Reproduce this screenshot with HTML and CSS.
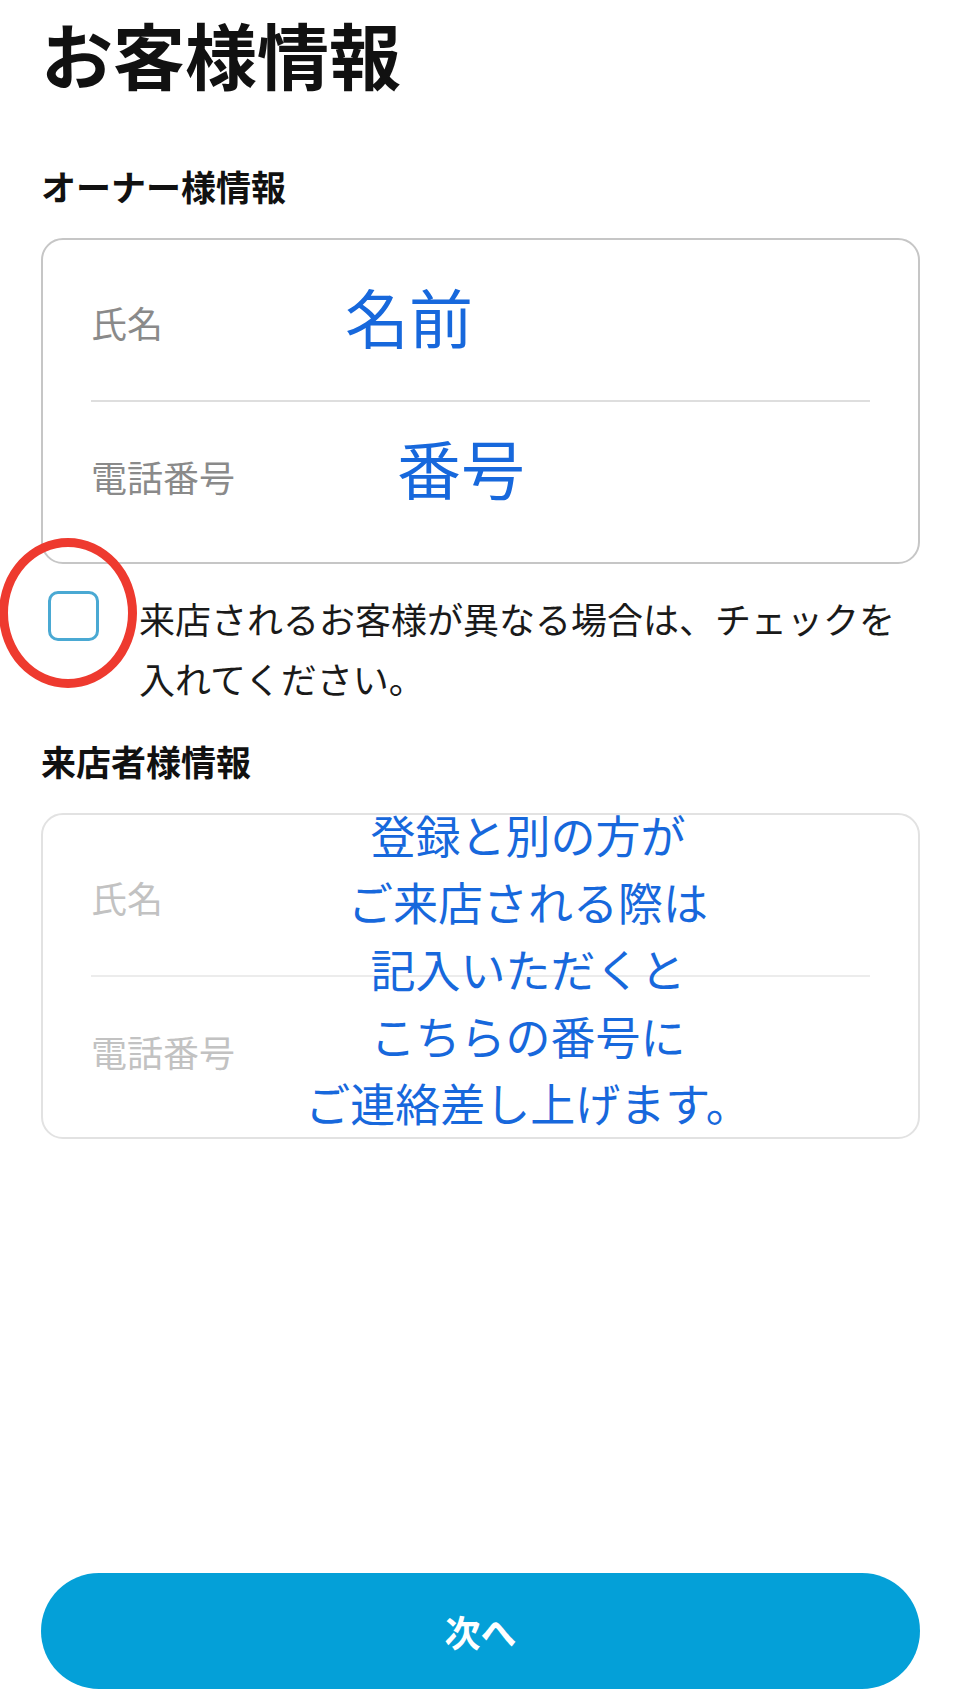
FILE: index.html
```html
<!DOCTYPE html>
<html lang="ja">
<head>
    <meta charset="UTF-8">
    <meta name="viewport" content="width=device-width, initial-scale=1.0">
    <title>お客様情報</title>
    <link rel="stylesheet" href="styles.css">
</head>
<body>

<div class="page">
    <h1 class="pageTitle">お客様情報</h1>

    <h2 class="sectionTitle">オーナー様情報</h2>
    <div class="formCard">
        <div class="formRow">
            <span class="rowLabel">氏名</span>
            <span class="note noteName">名前</span>
        </div>
        <div class="formRow">
            <span class="rowLabel">電話番号</span>
            <span class="note notePhone">番号</span>
        </div>
    </div>

    <label class="checkRow">
        <span class="checkBox">
            <span class="markCircle"></span>
        </span>
        <span class="checkText">来店されるお客様が異なる場合は、チェックを入れてください。</span>
    </label>

    <h2 class="sectionTitle">来店者様情報</h2>
    <div class="formCard formCard--disabled">
        <div class="formRow">
            <span class="rowLabel">氏名</span>
        </div>
        <div class="formRow">
            <span class="rowLabel">電話番号</span>
        </div>
        <!-- annotation over the second card -->
        <div class="noteBlock">
            登録と別の方が<br>
            ご来店される際は<br>
            記入いただくと<br>
            こちらの番号に<br>
            ご連絡差し上げます。
        </div>
    </div>

    <button class="nextBtn" id="nextBtn">次へ</button>
</div>

</body>
</html>
```

FILE: styles.css
```css
body {
    font-family: "Noto Sans CJK JP", "Noto Sans", sans-serif;
    margin: 0;
    padding: 0;
    background-color: #fff;
    color: #1a1a1a;
}
.page {
    display: flex;
    flex-direction: column;
    min-height: 1706px;
    box-sizing: border-box;
    padding: 8px 40px 17px 41px;
}
.pageTitle {
    margin: 0;
    font-size: 72px;
    line-height: 90px;
    font-weight: 700;
    color: #111;
}
.sectionTitle {
    margin: 63px 0 27px;
    font-size: 35px;
    line-height: 50px;
    font-weight: 700;
    color: #111;
}
.checkRow + .sectionTitle {
    margin-top: 28px;
}
.formCard {
    position: relative;
    border: 2px solid #c6c6c6;
    border-radius: 22px;
    padding: 8px 48px;
}
.formCard--disabled {
    border-color: #e2e2e2;
}
.formRow {
    position: relative;
    display: flex;
    align-items: center;
    height: 152px;
}
.formRow + .formRow {
    border-top: 2px solid #dedede;
}
.formCard--disabled .formRow + .formRow {
    border-top-color: #ececec;
}
.rowLabel {
    font-size: 36px;
    line-height: 50px;
    color: #8a8a8a;
    margin-top: -4px;
}
.formCard--disabled .rowLabel {
    color: #c2c2c2;
}
.note {
    position: absolute;
    font-size: 64px;
    line-height: 64px;
    color: #1768dc;
}
.noteName {
    left: 254px;
    top: 35px;
}
.notePhone {
    left: 306px;
    top: 32px;
}
.noteBlock {
    position: absolute;
    left: 235px;
    top: -14px;
    width: 500px;
    text-align: center;
    font-size: 45px;
    line-height: 67px;
    color: #1768dc;
}
.checkRow {
    display: flex;
    align-items: flex-start;
    margin-top: 24px;
}
.checkBox {
    position: relative;
    flex: none;
    width: 45px;
    height: 44px;
    margin: 3px 40px 0 7px;
    border: 3px solid #4aa9d3;
    border-radius: 10px;
}
.markCircle {
    position: absolute;
    left: -52px;
    top: -56px;
    width: 120px;
    height: 132px;
    border: 9px solid #ee3a2f;
    border-radius: 50%;
}
.checkText {
    font-size: 36px;
    line-height: 60px;
}
.nextBtn {
    margin-top: auto;
    height: 116px;
    border: none;
    border-radius: 58px;
    background-color: #04a0d8;
    color: #fff;
    font-family: inherit;
    font-size: 36px;
    font-weight: 700;
    cursor: pointer;
}
```
